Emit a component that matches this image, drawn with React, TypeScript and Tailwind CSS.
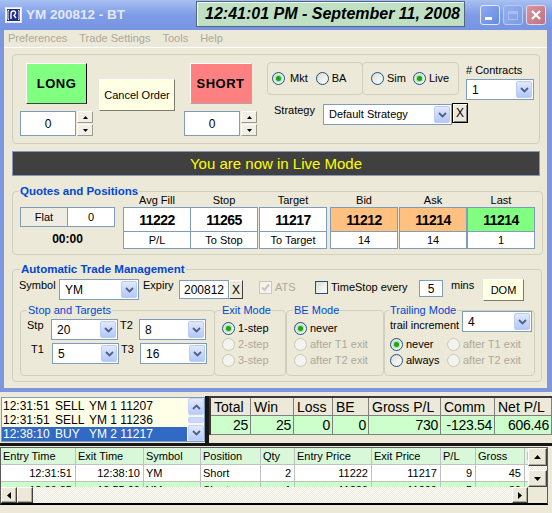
import React from 'react';

type Dir = 'up' | 'down' | 'left' | 'right';

function Tri({ dir, size = 7 }: { dir: Dir; size?: number }) {
  const h = Math.ceil(size / 2);
  const vert = dir === 'up' || dir === 'down';
  const d = {
    up: `M0 ${h}L${size / 2} 0L${size} ${h}Z`,
    down: `M0 0L${size} 0L${size / 2} ${h}Z`,
    left: `M${h} 0L${h} ${size}L0 ${size / 2}Z`,
    right: `M0 0L${h} ${size / 2}L0 ${size}Z`,
  }[dir];
  return (
    <svg width={vert ? size : h} height={vert ? h : size} viewBox={vert ? `0 0 ${size} ${h}` : `0 0 ${h} ${size}`} className="block">
      <path d={d} fill="#000" />
    </svg>
  );
}

function Chevron({ up = false }: { up?: boolean }) {
  return (
    <svg width="9" height="6" viewBox="0 0 9 6" className="block">
      <path d={up ? 'M1 5L4.5 1.5L8 5' : 'M1 1L4.5 4.5L8 1'} fill="none" stroke="#4d6185" strokeWidth="1.8" />
    </svg>
  );
}

function XpCombo({ value, className }: { value: string; className: string }) {
  return (
    <div className={`flex shrink-0 bg-white border border-[#7f9db9] ${className}`}>
      <div className="flex-1 flex items-center pl-[5px] whitespace-nowrap overflow-hidden">{value}</div>
      <div className="w-[16px] m-px flex items-center justify-center rounded-[2px] border border-[#bccbf2] bg-linear-to-b from-[#e0e9fe] to-[#b3c7f8]">
        <Chevron />
      </div>
    </div>
  );
}

function Radio({ label, checked, disabled, className = '' }: { label: string; checked?: boolean; disabled?: boolean; className?: string }) {
  return (
    <div className={`flex items-center gap-[3px] whitespace-nowrap ${className}`}>
      <span
        className={`w-[13px] h-[13px] shrink-0 rounded-full border flex items-center justify-center ${
          disabled ? 'border-[#cac8bb] bg-[#f4f3ee]' : 'border-[#1c5180] bg-linear-to-br from-[#dcdcd5] to-white'
        }`}
      >
        {checked && <span className="w-[5px] h-[5px] rounded-full bg-[#21a121] shadow-[0_0_1px_1px_#8de88d]" />}
      </span>
      <span className={disabled ? 'text-[#aca899]' : ''}>{label}</span>
    </div>
  );
}

function CheckBox({ checked, disabled }: { checked?: boolean; disabled?: boolean }) {
  return (
    <span
      className={`w-[13px] h-[13px] shrink-0 border flex items-center justify-center ${
        disabled ? 'border-[#cac8bb] bg-[#f4f3ee]' : 'border-[#1c5180] bg-linear-to-br from-[#dcdcd5] to-white'
      }`}
    >
      {checked && (
        <svg width="9" height="9" viewBox="0 0 9 9" className="block">
          <path d="M1 4.5L3.5 7L8 1.5" fill="none" stroke={disabled ? '#cac8bb' : '#21a121'} strokeWidth="2" />
        </svg>
      )}
    </span>
  );
}

function SpinBtn({ dir }: { dir: Dir }) {
  return (
    <div className="flex-1 flex items-center justify-center bg-[#f1efe6] border border-t-white border-l-white border-r-[#9d9a8a] border-b-[#9d9a8a]">
      <Tri dir={dir} size={5} />
    </div>
  );
}

function Spinner() {
  return (
    <div className="flex w-[73px] h-[25px]">
      <div className="w-[57px] bg-white border border-[#7f9db9] flex items-center justify-center text-[12px]">0</div>
      <div className="w-[16px] ml-px flex flex-col gap-px">
        <SpinBtn dir="up" />
        <SpinBtn dir="down" />
      </div>
    </div>
  );
}

function ClassicBtn({ dir, className }: { dir: Dir; className: string }) {
  return (
    <div className={`flex items-center justify-center bg-[#ece9d8] border border-t-white border-l-white border-r-[#404040] border-b-[#404040] shadow-[inset_-1px_-1px_#aca899] ${className}`}>
      <Tri dir={dir} />
    </div>
  );
}

function AppIcon() {
  return (
    <svg width="17" height="16" viewBox="0 0 17 16" className="block shrink-0">
      <rect x="0.5" y="0.5" width="16" height="15" fill="#ffffff" stroke="#dfe6fa" />
      <rect x="2" y="2" width="13" height="12" fill="#1c2d8f" />
      <path d="M4 3.5H3V12.5H4M13 3.5H14V12.5H13" fill="none" stroke="#fff" strokeWidth="1" />
      <path d="M6 12V6.5C6 5 7 4 8.5 4C10 4 11 5.2 10.5 6.5L9 8.5L11 11" fill="none" stroke="#fff" strokeWidth="1.4" />
    </svg>
  );
}

function TitleBar() {
  return (
    <div className="h-[30px] flex items-start bg-linear-to-b from-[#a8c0f2] via-[#7e9ce6] to-[#7694e2]">
      <div className="w-[196px] h-full flex items-center pl-[5px]">
        <AppIcon />
        <span className="ml-[4px] text-[13.5px] font-bold text-[#e2e9fa] whitespace-nowrap">YM 200812 - BT</span>
      </div>
      <div className="mt-px w-[269px] h-[26px] flex items-center pl-[8px] bg-[#bfe0c3] border border-[#55657f] shadow-[inset_1px_1px_#f2f8f2] text-[16px] font-bold italic whitespace-nowrap">
        12:41:01 PM - September 11, 2008
      </div>
      <div className="ml-[15px] mt-[5px] flex gap-[3px]">
        <div className="w-[20px] h-[20px] rounded-[3px] border border-[#e2eafb] bg-linear-to-br from-[#8eabf0] to-[#6289e3] flex items-end pl-[4px] pb-[4px]">
          <span className="w-[7px] h-[3px] bg-white" />
        </div>
        <div className="w-[20px] h-[20px] rounded-[3px] border border-[#b9caf3] bg-linear-to-br from-[#96b0ef] to-[#7c9be6] flex items-center justify-center">
          <span className="w-[10px] h-[9px] border border-t-[3px] border-[#a9bdf0]" />
        </div>
        <div className="w-[20px] h-[20px] rounded-[3px] border border-[#ecd5dc] bg-linear-to-br from-[#d894a0] to-[#c0727f] flex items-center justify-center">
          <svg width="10" height="10" viewBox="0 0 10 10" className="block">
            <path d="M1 1L9 9M9 1L1 9" stroke="#fff" strokeWidth="2.2" />
          </svg>
        </div>
      </div>
    </div>
  );
}

function Sub({ title, className, children }: { title: string; className: string; children: React.ReactNode }) {
  return (
    <fieldset className={`h-[72px] shrink-0 border border-[#d0d0bf] rounded-[4px] ${className}`}>
      <legend className="-ml-px px-px text-[11px] leading-[13px] text-[#0046d5] whitespace-nowrap">{title}</legend>
      {children}
    </fieldset>
  );
}

function QCol({ head, top, bottom, topBg = 'bg-white', className = '' }: { head: string; top: string; bottom: string; topBg?: string; className?: string }) {
  return (
    <div className={`flex flex-col w-[68px] shrink-0 ${className}`}>
      <div className="h-[13px] leading-[13px] text-center">{head}</div>
      <div className="flex flex-col border border-[#7f9db9]">
        <div className={`h-[23px] flex items-center justify-center text-[14px] font-bold tracking-[-0.5px] ${topBg}`}>{top}</div>
        <div className="h-[17px] flex items-center justify-center bg-white border-t border-[#7f9db9]">{bottom}</div>
      </div>
    </div>
  );
}

const STATS = [
  { h: 'Total', v: '25', w: 'w-[40px]' },
  { h: 'Win', v: '25', w: 'w-[43px]' },
  { h: 'Loss', v: '0', w: 'w-[39px]' },
  { h: 'BE', v: '0', w: 'w-[36px]' },
  { h: 'Gross P/L', v: '730', w: 'w-[72px]' },
  { h: 'Comm', v: '-123.54', w: 'w-[54px]' },
  { h: 'Net P/L', v: '606.46', w: 'flex-1' },
];

const COLS = [
  { h: 'Entry Time', w: 'w-[75px]', right: true },
  { h: 'Exit Time', w: 'w-[68px]', right: true },
  { h: 'Symbol', w: 'w-[57px]', right: false },
  { h: 'Position', w: 'w-[60px]', right: false },
  { h: 'Qty', w: 'w-[34px]', right: true },
  { h: 'Entry Price', w: 'w-[77px]', right: true },
  { h: 'Exit Price', w: 'w-[69px]', right: true },
  { h: 'P/L', w: 'w-[35px]', right: true },
  { h: 'Gross', w: 'w-[49px]', right: true },
  { h: 'Net', w: 'w-[60px]', right: true },
];

const TRADES = [
  { bg: 'bg-white', cells: ['12:31:51', '12:38:10', 'YM', 'Short', '2', '11222', '11217', '9', '45', '35'] },
  { bg: 'bg-[#ccffcc]', cells: ['12:36:35', '12:55:09', 'YM', 'Short', '1', '11236', '11209', '5', '30', '25'] },
];

const LOG = [
  { t: '12:31:51', a: 'SELL', d: 'YM 1 11207', sel: false },
  { t: '12:31:51', a: 'SELL', d: 'YM 1 11236', sel: false },
  { t: '12:38:10', a: 'BUY', d: 'YM 2 11217', sel: true },
];

function Window() {
  return (
    <div className="h-[392px] flex flex-col">
      <TitleBar />
      <div className="flex-1 flex flex-col border-l-4 border-r-[5px] border-b-4 border-[#7c96e0] bg-[#ece9d8]">
        {/* menu */}
        <div className="h-[18px] flex items-center gap-[12px] pl-[4px] text-[#aca899] border-b border-white">
          <span>Preferences</span>
          <span>Trade Settings</span>
          <span>Tools</span>
          <span>Help</span>
        </div>

        {/* order entry */}
        <div className="mt-[6px] ml-[8px] w-[528px] h-[90px] flex items-start pl-[7px] border border-[#d0d0bf] rounded-[4px]">
          <div className="w-[73px] mt-[8px] flex flex-col items-center">
            <div className="w-[61px] h-[41px] flex items-center justify-center bg-[#80ff80] border border-t-white border-l-white border-r-black border-b-[#404040] text-[13px] font-bold tracking-[0.5px]">
              LONG
            </div>
            <div className="mt-[7px]">
              <Spinner />
            </div>
          </div>
          <div className="ml-[6px] mt-[24px] w-[76px] h-[32px] flex items-center justify-center bg-[#ffffe3] border border-t-white border-l-white border-r-[#7d7b70] border-b-[#7d7b70]">
            Cancel Order
          </div>
          <div className="ml-[9px] w-[73px] mt-[8px] flex flex-col items-center">
            <div className="w-[62px] h-[41px] flex items-center justify-center bg-[#ff8080] border border-t-white border-l-white border-r-[#a8a8a8] border-b-[#a8a8a8] text-[13px] font-bold tracking-[0.5px]">
              SHORT
            </div>
            <div className="mt-[7px]">
              <Spinner />
            </div>
          </div>
          <div className="ml-[10px] mt-[7px] flex flex-col">
            <div className="flex items-start">
              <div className="w-[96px] h-[33px] flex items-center pl-[4px] border border-[#d0d0bf] rounded-[4px]">
                <Radio label="Mkt" checked className="gap-[5px]" />
                <Radio label="BA" className="ml-[8px]" />
              </div>
              <div className="-ml-px w-[97px] h-[33px] flex items-center pl-[8px] border border-[#d0d0bf] rounded-[4px]">
                <Radio label="Sim" />
                <Radio label="Live" checked className="ml-[7px]" />
              </div>
              <div className="ml-[7px] flex flex-col">
                <div className="mt-[2px] leading-[13px]"># Contracts</div>
                <XpCombo value="1" className="mt-[2px] w-[68px] h-[21px] text-[12px]" />
              </div>
            </div>
            <div className="mt-[3px] flex items-start">
              <div className="ml-[7px] w-[49px] leading-[13px] mt-[1px]">Strategy</div>
              <XpCombo value="Default Strategy" className="mt-px w-[129px] h-[21px]" />
              <div className="w-[16px] h-[20px] flex items-center justify-center bg-[#ece9d8] border border-black shadow-[inset_1px_1px_#fff,inset_-1px_-1px_#808080] text-[12px]">
                X
              </div>
            </div>
          </div>
        </div>

        {/* mode banner */}
        <div className="mt-[7px] ml-[8px] w-[528px] h-[25px] flex items-center justify-center bg-[#404040] border border-[#8797b8] text-[15px] text-[#ffff00]">
          You are now in Live Mode
        </div>

        {/* quotes */}
        <fieldset className="mt-[8px] ml-[8px] w-[528px] px-[7px] pb-[5px] border border-[#d0d0bf] rounded-[4px]">
          <legend className="-ml-px px-px text-[11.5px] leading-[14px] font-bold text-[#0046d5]">Quotes and Positions</legend>
          <div className="-mt-[4px] flex items-start">
            <div className="w-[95px] mt-[13px] flex flex-col">
              <div className="h-[20px] flex border border-[#7f9db9]">
                <div className="w-[47px] flex items-center justify-center bg-[#efede2] border-r border-[#7f9db9]">Flat</div>
                <div className="flex-1 flex items-center justify-center bg-white">0</div>
              </div>
              <div className="mt-[6px] text-center text-[12px] font-bold">00:00</div>
            </div>
            <QCol head="Avg Fill" top="11222" bottom="P/L" className="ml-[8px]" />
            <QCol head="Stop" top="11265" bottom="To Stop" className="-ml-px" />
            <QCol head="Target" top="11217" bottom="To Target" className="ml-px" />
            <QCol head="Bid" top="11212" bottom="14" topBg="bg-[#ffc080]" className="ml-[3px]" />
            <QCol head="Ask" top="11214" bottom="14" topBg="bg-[#ffc080]" className="ml-px" />
            <QCol head="Last" top="11214" bottom="1" topBg="bg-[#80ff80]" />
          </div>
        </fieldset>

        {/* automatic trade management */}
        <fieldset className="mt-[7px] ml-[8px] w-[528px] px-[6px] pb-[5px] border border-[#d0d0bf] rounded-[4px]">
          <legend className="ml-px px-px text-[11.5px] leading-[14px] font-bold text-[#0046d5]">Automatic Trade Management</legend>
          <div className="mt-[3px] flex items-start">
            <div className="w-[40px] leading-[13px]">Symbol</div>
            <XpCombo value="YM" className="w-[80px] h-[21px] text-[12px]" />
            <div className="ml-[4px] w-[36px] leading-[13px]">Expiry</div>
            <div className="mt-px w-[50px] h-[19px] flex items-center justify-center bg-white border border-[#7f9db9] text-[12px]">200812</div>
            <div className="mt-px w-[14px] h-[19px] flex items-center justify-center bg-[#ece9d8] border border-t-white border-l-white border-r-[#404040] border-b-[#404040] text-[12px]">
              X
            </div>
            <div className="ml-[16px] w-[56px] mt-[2px] flex items-center gap-[3px]">
              <CheckBox checked disabled />
              <span className="text-[#aca899]">ATS</span>
            </div>
            <div className="w-[104px] mt-[2px] flex items-center gap-[3px] whitespace-nowrap">
              <CheckBox />
              <span>TimeStop every</span>
            </div>
            <div className="mt-px w-[24px] h-[17px] flex items-center justify-center bg-white border border-[#7f9db9] text-[12px]">5</div>
            <div className="w-[40px] pl-[8px] leading-[13px]">mins</div>
            <div className="w-[41px] h-[22px] flex items-center justify-center bg-[#ffffe3] border border-t-white border-l-white border-r-[#7d7b70] border-b-[#7d7b70]">
              DOM
            </div>
          </div>
          <div className="mt-[3px] ml-px flex items-start">
            <Sub title="Stop and Targets" className="w-[192px] px-[7px]">
              <div className="mt-[2px] flex items-start">
                <div className="w-[24px] -ml-px leading-[13px]">Stp</div>
                <XpCombo value="20" className="w-[67px] h-[21px] text-[12px]" />
                <div className="w-[21px] pl-[2px] leading-[13px]">T2</div>
                <XpCombo value="8" className="w-[67px] h-[21px] text-[12px]" />
              </div>
              <div className="mt-[3px] flex items-start">
                <div className="w-[24px] pl-[3px] leading-[13px]">T1</div>
                <XpCombo value="5" className="w-[67px] h-[21px] text-[12px]" />
                <div className="w-[21px] pl-[2px] leading-[13px]">T3</div>
                <XpCombo value="16" className="w-[67px] h-[21px] text-[12px]" />
              </div>
            </Sub>
            <Sub title="Exit Mode" className="-ml-px w-[72px] px-[7px]">
              <div className="mt-[3px] flex flex-col">
                <Radio label="1-step" checked className="h-[16px]" />
                <Radio label="2-step" disabled className="h-[16px]" />
                <Radio label="3-step" disabled className="h-[16px]" />
              </div>
            </Sub>
            <Sub title="BE Mode" className="w-[98px] px-[7px]">
              <div className="mt-[3px] flex flex-col">
                <Radio label="never" checked className="h-[16px]" />
                <Radio label="after T1 exit" disabled className="h-[16px]" />
                <Radio label="after T2 exit" disabled className="h-[16px]" />
              </div>
            </Sub>
            <Sub title="Trailing Mode" className="w-[151px] pl-[5px] pr-[2px]">
              <div className="-mt-[6px] h-[21px] flex items-end justify-between">
                <span className="leading-[13px] whitespace-nowrap">trail increment</span>
                <XpCombo value="4" className="w-[70px] h-[21px] text-[12px]" />
              </div>
              <div className="mt-[4px] grid grid-cols-[57px_1fr]">
                <Radio label="never" checked className="h-[16px]" />
                <Radio label="after T1 exit" disabled className="h-[16px]" />
                <Radio label="always" className="h-[16px]" />
                <Radio label="after T2 exit" disabled className="h-[16px]" />
              </div>
            </Sub>
          </div>
        </fieldset>
      </div>
    </div>
  );
}

function BottomPanel() {
  return (
    <div className="h-[121px] flex flex-col">
      <div className="pt-[4px] flex h-[51px]">
        {/* order log */}
        <div className="ml-px mt-px w-[204px] h-[45px] flex bg-[#ffffe8] border border-[#7f9db9]">
          <div className="flex-1 pt-px flex flex-col text-[12px]">
            {LOG.map((r, i) => (
              <div key={i} className={`h-[14px] flex items-center pl-px ${r.sel ? 'bg-[#316ac5] text-white' : ''}`}>
                <span className="w-[52px]">{r.t}</span>
                <span className="w-[34px]">{r.a}</span>
                <span className="whitespace-nowrap">{r.d}</span>
              </div>
            ))}
          </div>
          <div className="w-[16px] ml-px flex flex-col bg-[#f7f6f0]">
            <div className="h-[17px] flex items-center justify-center rounded-[2px] border border-[#c5d3f6] bg-linear-to-b from-[#e2eafe] to-[#b9cbf9]">
              <Chevron up />
            </div>
            <div className="mt-[2px] h-[6px] rounded-[2px] border border-[#c5d3f6] bg-[#c9d8fc]" />
            <div className="mt-auto h-[16px] flex items-center justify-center rounded-[2px] border border-[#c5d3f6] bg-linear-to-b from-[#e2eafe] to-[#b9cbf9]">
              <Chevron />
            </div>
          </div>
        </div>
        <div className="w-[4px] bg-[#161616]" />
        {/* summary */}
        <div className="flex-1 flex flex-col">
          <div className="flex border-t-2 border-l-2 border-[#3a3a3a] text-[14px]">
            {STATS.map((s) => (
              <div key={s.h} className={`flex flex-col ${s.w}`}>
                <div className="h-[18px] flex items-center pl-[3px] border-r border-b border-[#808080] whitespace-nowrap">{s.h}</div>
                <div className="h-[19px] flex items-center justify-end pr-[2px] bg-[#ccffcc] border-r border-b border-[#808080] tracking-[-0.3px]">{s.v}</div>
              </div>
            ))}
          </div>
        </div>
      </div>
      <div className="h-[3px] bg-[#161616]" />
      {/* trades grid */}
      <div className="mt-px w-[548px] h-[58px] flex border-t border-l border-r border-[#5a5a5a] border-b-2 border-b-black">
        <div className="flex-1 flex flex-col overflow-hidden">
          <div className="h-[39px] overflow-hidden flex flex-col">
            <div className="flex shrink-0 h-[17px] bg-[#d9f8d9] border-b border-[#c0c0c0]">
              {COLS.map((c) => (
                <div key={c.h} className={`${c.w} shrink-0 flex items-center pl-[2px] border-r border-[#c0c0c0] whitespace-nowrap`}>
                  {c.h}
                </div>
              ))}
            </div>
            {TRADES.map((t, i) => (
              <div key={i} className={`flex shrink-0 h-[17px] border-b border-[#c0c0c0] ${t.bg}`}>
                {t.cells.map((v, j) => (
                  <div
                    key={j}
                    className={`${COLS[j].w} shrink-0 flex items-center border-r border-[#c0c0c0] whitespace-nowrap ${
                      COLS[j].right ? 'justify-end pr-[3px]' : 'pl-[2px]'
                    }`}
                  >
                    {v}
                  </div>
                ))}
              </div>
            ))}
          </div>
          <div className="h-[16px] flex">
            <ClassicBtn dir="left" className="w-[16px]" />
            <div className="w-[16px] bg-[#ece9d8] border border-t-white border-l-white border-r-[#404040] border-b-[#404040] shadow-[inset_-1px_-1px_#aca899]" />
            <div className="flex-1 bg-[image:repeating-conic-gradient(#ece9d8_0%_25%,#ffffff_0%_50%)] bg-[length:2px_2px]" />
            <ClassicBtn dir="right" className="w-[16px]" />
          </div>
        </div>
        <div className="w-[19px] flex flex-col">
          <ClassicBtn dir="up" className="h-[18px]" />
          <div className="h-[4px] bg-[image:repeating-conic-gradient(#ece9d8_0%_25%,#ffffff_0%_50%)] bg-[length:2px_2px]" />
          <ClassicBtn dir="down" className="h-[17px]" />
          <div className="flex-1 bg-[#ece9d8]" />
        </div>
      </div>
    </div>
  );
}

export default function App() {
  return (
    <div className="w-[552px] h-[513px] overflow-hidden bg-[#ece9d8] font-['Liberation_Sans',Arial,sans-serif] text-[11px] leading-none text-black">
      <Window />
      <BottomPanel />
    </div>
  );
}
